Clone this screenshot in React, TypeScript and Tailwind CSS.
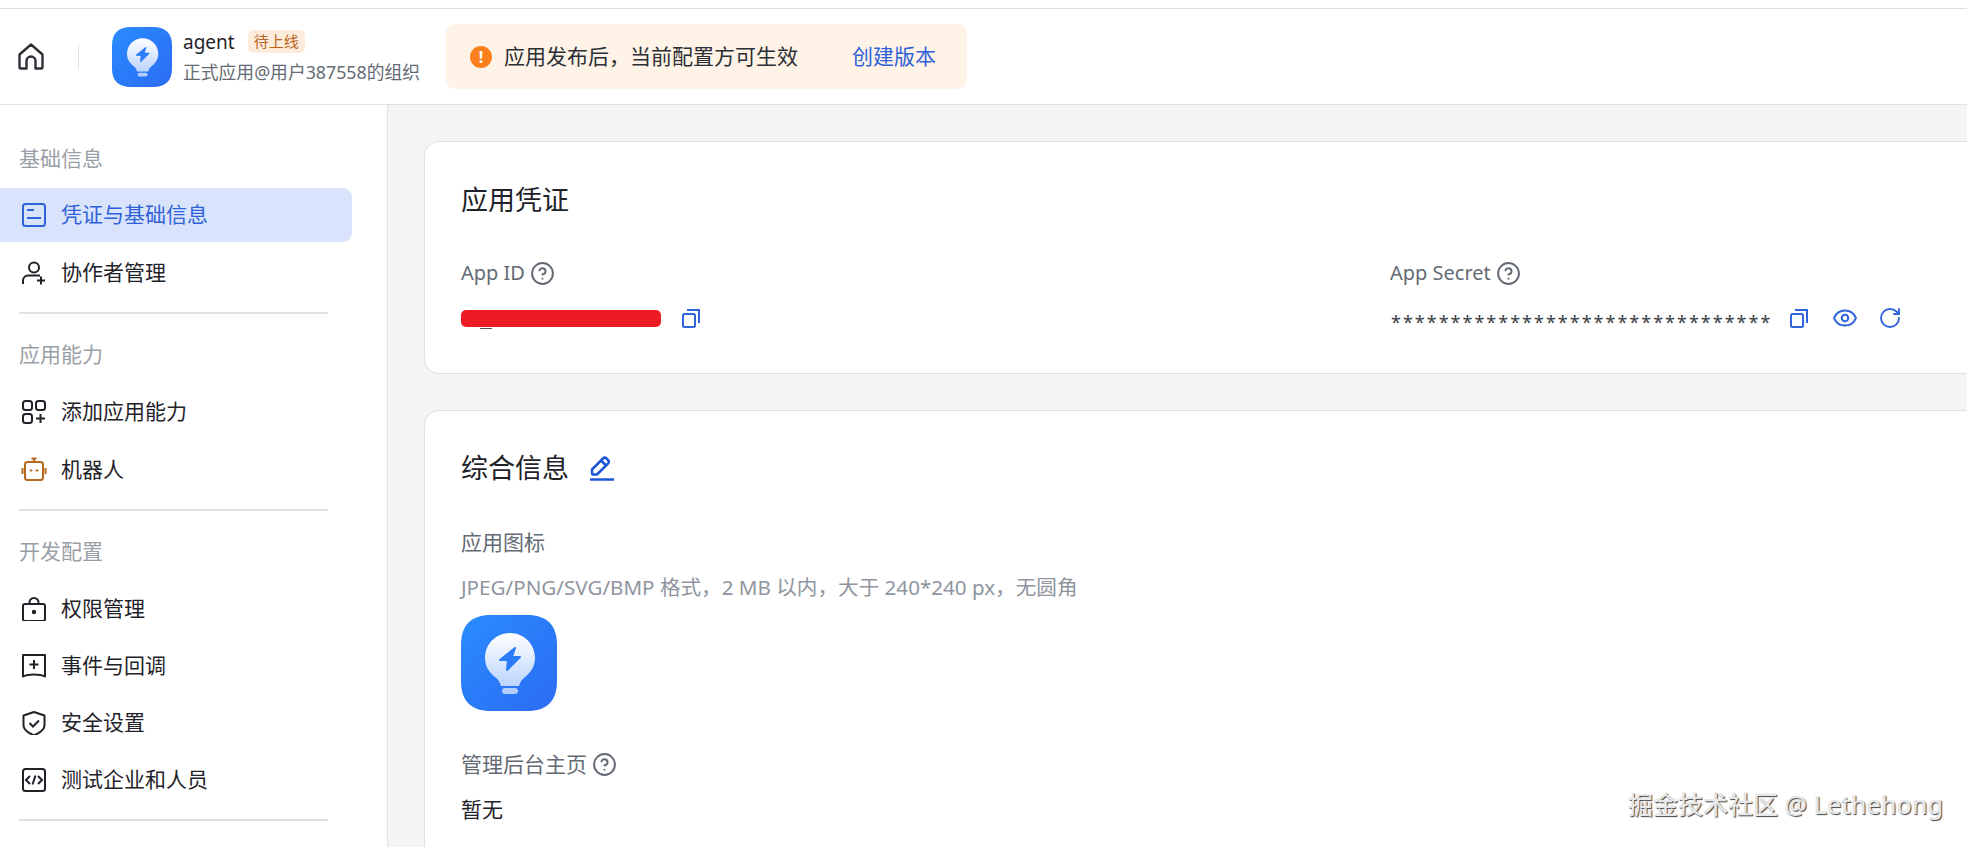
import React from 'react';
import { CircleHelp, Eye, RotateCw } from 'lucide-react';

const AppLogo: React.FC<{ className: string }> = ({ className }) => (
  <svg className={className} viewBox="0 0 96 96">
    <defs>
      <linearGradient id="logoBg" x1="0" y1="0" x2="1" y2="1">
        <stop offset="0" stopColor="#2a8cff" />
        <stop offset="1" stopColor="#2b6bf3" />
      </linearGradient>
      <linearGradient id="logoBulb" x1="0" y1="0" x2="0" y2="1">
        <stop offset="0" stopColor="#ffffff" />
        <stop offset="1" stopColor="#bcd4fd" />
      </linearGradient>
    </defs>
    <path d="M30 0H66C86 0 96 10 96 30V66C96 86 86 96 66 96H30C10 96 0 86 0 66V30C0 10 10 0 30 0Z" fill="url(#logoBg)" />
    <path d="M49 18C63 18 74 29 74 43C74 52 69 58 64 62C60 65 59 68 58 71H40C39 68 38 65 34 62C29 58 24 52 24 43C24 29 35 18 49 18Z" fill="url(#logoBulb)" />
    <rect x="41" y="73" width="16" height="6" rx="3" fill="#b5cefb" />
    <path d="M54 33L39 45H47L46 55L59 42H51Z" fill="#2b7cf8" stroke="#2b7cf8" strokeWidth="2" strokeLinejoin="round" />
  </svg>
);

const icons: Record<string, React.ReactNode> = {
  credential: (
    <>
      <rect x="1" y="1" width="22" height="22" rx="2.5" />
      <path d="M5 7h7M5 15h14" />
    </>
  ),
  user: (
    <>
      <circle cx="12" cy="6.5" r="5" />
      <path d="M1 23v-3.5C1 16.5 3.5 14.5 6 14.5h12M15 19.5h8M19 15.5v8" />
    </>
  ),
  apps: (
    <>
      <rect x="1" y="1" width="9" height="9" rx="2.5" />
      <rect x="14" y="1" width="9" height="9" rx="2.5" />
      <rect x="1" y="14" width="9" height="9" rx="2.5" />
      <path d="M14 18.5h9M18.5 14v9" />
    </>
  ),
  bag: (
    <>
      <rect x="1" y="7" width="22" height="17" rx="2" />
      <path d="M7.5 7V5.5C7.5 3 9.5 1 12 1s4.500 2 4.500 4.500V7" />
      <circle cx="12" cy="15" r="1.200" fill="currentColor" />
    </>
  ),
  event: (
    <>
      <path d="M1 1h22v21.500c-3-1.500-7-2-11-2s-8 .5-11 2Z" strokeLinejoin="round" />
      <path d="M7.500 10.500h9M12 6v9" />
    </>
  ),
  shield: (
    <>
      <path d="M12 1l10.500 3.500v10c0 4-5 7.500-10.500 10C6.500 22 1.500 18.500 1.500 14.500v-10Z" strokeLinejoin="round" />
      <path d="M7.500 12l3.500 3.500 6-6" />
    </>
  ),
  code: (
    <>
      <rect x="1" y="1" width="22" height="22" rx="2.500" />
      <path d="M8 8l-4 4 4 4M16 8l4 4-4 4M13.500 7.500l-3 9" />
    </>
  ),
};

const SideItem: React.FC<{ icon: string; label: string; active?: boolean; className?: string }> = ({
  icon,
  label,
  active,
  className = '',
}) => (
  <div
    className={`flex h-[54px] w-[352px] items-center pl-[22px] text-[21px] ${
      active ? 'rounded-r-[9px] bg-[#d9e4fc] text-[#2f62d8]' : 'text-[#1f2329]'
    } ${className}`}
  >
    {icon === 'robot' ? (
      <svg className="h-[26px] w-[26px] -ml-px text-[#b4691f]" viewBox="0 0 26 26" fill="none" stroke="currentColor" strokeWidth="2">
        <rect x="4" y="5" width="18" height="18" rx="2.500" />
        <path d="M13 1v4M10.500 1.500h5M1.500 11v6M24.500 11v6" />
        <path d="M9.500 13.500h1M15.500 13.500h1" strokeLinecap="round" />
      </svg>
    ) : (
      <svg className="h-6 w-6" viewBox="0 0 24 24" fill="none" stroke="currentColor" strokeWidth="2">
        {icons[icon]}
      </svg>
    )}
    <span className={icon === 'robot' ? 'ml-[14px]' : 'ml-[15px]'}>{label}</span>
  </div>
);

const SectionLabel: React.FC<{ text: string; className?: string }> = ({ text, className = '' }) => (
  <div className={`pl-[19px] text-[21px] leading-[30px] text-[#9a9fa7] ${className}`}>{text}</div>
);

const SideDivider: React.FC<{ className?: string }> = ({ className = '' }) => (
  <div className={`ml-[19px] h-[2px] w-[309px] bg-[#dfe1e4] ${className}`} />
);

const CopyIcon = () => (
  <svg className="h-[19px] w-[18px] text-[#3165dc]" viewBox="0 0 18 19" fill="none" stroke="currentColor" strokeWidth="2">
    <rect x="1" y="5" width="12" height="13" rx="1.500" />
    <path d="M5 1h12v13" />
  </svg>
);

const Help: React.FC<{ className?: string }> = ({ className = '' }) => (
  <CircleHelp className={`h-[25px] w-[25px] text-[#646a73] ${className}`} strokeWidth={1.9} />
);

export default function App() {
  return (
    <div className="flex h-[847px] w-full flex-col overflow-hidden bg-white font-['Noto_Sans','Noto_Sans_CJK_SC',sans-serif]">
      <div className="h-[9px] shrink-0 border-b border-[#dcdde0] bg-white" />

      {/* top bar */}
      <header className="flex h-[96px] shrink-0 items-center border-b border-[#dee0e3] bg-white pl-[18px]">
        <svg className="h-[27px] w-[26px] text-[#2b2f36]" viewBox="0 0 26 27" fill="none" stroke="currentColor" strokeWidth="2.400" strokeLinejoin="round">
          <path d="M1.500 11.500L13 1.500l11.500 10V24a1.500 1.500 0 0 1-1.500 1.500h-5.500V18a4.500 4.500 0 0 0-9 0v7.500H3A1.500 1.500 0 0 1 1.500 24Z" />
        </svg>
        <div className="ml-[34px] h-6 w-px bg-[#dee0e3]" />
        <AppLogo className="ml-[33px] h-[60px] w-[60px]" />
        <div className="ml-[11px] flex w-[250px] shrink-0 flex-col">
          <div className="flex items-center">
            <span className="text-[19px] leading-[30px] text-[#1f2329]">agent</span>
            <span className="ml-[13px] rounded-[5px] bg-[#fdecdd] px-[6px] text-[15px] leading-[23px] text-[#b9651c]">待上线</span>
          </div>
          <div className="text-[17.800px] leading-[30px] whitespace-nowrap text-[#646a73]">正式应用@用户387558的组织</div>
        </div>
        <div className="ml-[13px] flex h-[65px] w-[521px] items-center rounded-[9px] bg-[#fff3e7] pl-[24px] text-[21px]">
          <span className="flex h-[22px] w-[22px] items-center justify-center rounded-full bg-[#fa7f1e] text-[16px] font-bold text-white">!</span>
          <span className="ml-[12px] text-[#2b2f36]">应用发布后，当前配置方可生效</span>
          <span className="ml-[54px] text-[#2f62d8]">创建版本</span>
        </div>
      </header>

      <div className="flex min-h-0 flex-1">
        {/* left menu */}
        <aside className="w-[388px] shrink-0 border-r border-[#dee0e3] bg-white pt-[38px]">
          <SectionLabel text="基础信息" className="mb-[15px]" />
          <SideItem icon="credential" label="凭证与基础信息" active />
          <SideItem icon="user" label="协作者管理" className="mt-[4px]" />
          <SideDivider className="mt-[12px]" />
          <SectionLabel text="应用能力" className="mt-[25px] mb-[16px]" />
          <SideItem icon="apps" label="添加应用能力" />
          <SideItem icon="robot" label="机器人" className="mt-[4px]" />
          <SideDivider className="mt-[12px]" />
          <SectionLabel text="开发配置" className="mt-[25px] mb-[16px]" />
          <SideItem icon="bag" label="权限管理" />
          <SideItem icon="event" label="事件与回调" className="mt-[3px]" />
          <SideItem icon="shield" label="安全设置" className="mt-[3px]" />
          <SideItem icon="code" label="测试企业和人员" className="mt-[3px]" />
          <SideDivider className="mt-[12px]" />
        </aside>

        {/* main content */}
        <main className="relative min-w-0 flex-1 bg-[#f3f4f6] pt-[36px] pl-[36px]">
          <section className="-mr-6 h-[233px] rounded-[15px] border border-[#dee0e3] bg-white pl-[36px]">
            <h2 className="pt-[40px] text-[27px] leading-[36px] font-normal text-[#1f2329]">应用凭证</h2>
            <div className="mt-[40px] flex">
              <div className="w-[929px]">
                <div className="flex items-center text-[20px] leading-[30px] text-[#646a73]">
                  App ID
                  <Help className="ml-[5px]" />
                </div>
                <div className="mt-[15px] flex h-[30px] items-center">
                  <div className="relative h-[17px] w-[200px] rounded-[5px] bg-[#ed1c24]">
                    <div className="absolute top-[18px] left-[19px] h-px w-[12px] bg-[#555]" />
                  </div>
                  <span className="ml-[21px]"><CopyIcon /></span>
                </div>
              </div>
              <div>
                <div className="flex items-center text-[20px] leading-[30px] text-[#646a73]">
                  App Secret
                  <Help className="ml-[5px]" />
                </div>
                <div className="mt-[15px] flex h-[30px] items-center text-[#3165dc]">
                  <span className="w-[400px] pt-[8px] pl-px text-[18px] tracking-[2px] text-[#3a3d42]">********************************</span>
                  <CopyIcon />
                  <Eye className="ml-[24px] h-[26px] w-[26px]" strokeWidth={1.900} />
                  <RotateCw className="ml-[20px] h-[24px] w-[24px]" strokeWidth={1.900} />
                </div>
              </div>
            </div>
          </section>

          <section className="-mr-6 mt-[36px] h-[500px] rounded-[15px] border border-[#dee0e3] bg-white pl-[36px]">
            <div className="flex items-center pt-[39px]">
              <h2 className="text-[27px] leading-[36px] font-normal text-[#1f2329]">综合信息</h2>
              <svg className="ml-[20px] h-[26px] w-[26px] text-[#1e56d8]" viewBox="0 0 26 26" fill="none" stroke="currentColor" strokeWidth="2.500" strokeLinejoin="round">
                <path d="M3 18.500V14.500L14 3.500a2.500 2.500 0 0 1 3.500 0l1.500 1.500a2.500 2.500 0 0 1 0 3.500L8 19.500H3.500Z" />
                <path d="M12 5.500l5.500 5.500M1 24.500h24" />
              </svg>
            </div>
            <div className="mt-[41px] text-[21px] leading-[30px] text-[#646a73]">应用图标</div>
            <div className="mt-[15px] text-[20.600px] leading-[30px] text-[#8f959e]">JPEG/PNG/SVG/BMP 格式，2 MB 以内，大于 240*240 px，无圆角</div>
            <AppLogo className="mt-[13px] h-[96px] w-[96px]" />
            <div className="mt-[38px] flex items-center text-[21px] leading-[30px] text-[#646a73]">
              管理后台主页
              <Help className="ml-[5px]" />
            </div>
            <div className="mt-[15px] text-[21px] leading-[30px] text-[#1f2329]">暂无</div>
          </section>

          <div className="absolute right-[24px] bottom-[26px] text-[25px] leading-[34px] font-medium text-[#e6e7e8] [text-shadow:1px_1px_1px_#444,-1px_-1px_0_#fff]">
            掘金技术社区 @ Lethehong
          </div>
        </main>
      </div>
    </div>
  );
}
